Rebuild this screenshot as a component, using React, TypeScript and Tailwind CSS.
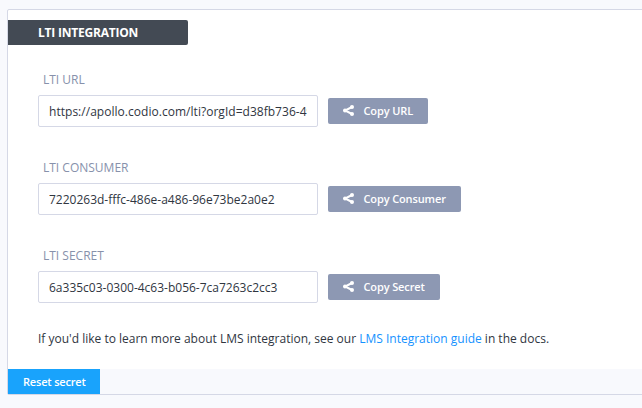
const fields = [
  { label: 'LTI URL', value: 'https://apollo.codio.com/lti?orgId=d38fb736-49', action: 'Copy URL', width: 'w-[100px]', tracking: 'tracking-[0.03px]' },
  { label: 'LTI CONSUMER', value: '7220263d-fffc-486e-a486-96e73be2a0e2', action: 'Copy Consumer', width: 'w-[133px]', tracking: 'tracking-normal' },
  { label: 'LTI SECRET', value: '6a335c03-0300-4c63-b056-7ca7263c2cc3', action: 'Copy Secret', width: 'w-[112px]', tracking: 'tracking-normal' },
];

function ShareIcon() {
  return (
    <svg className="-mt-px h-[11px] w-[11px] shrink-0" viewBox="0 0 11 11" fill="currentColor">
      <path d="M9 2 2 5.5 9 9" fill="none" stroke="currentColor" strokeWidth="2" />
      <circle cx="2" cy="5.5" r="2" />
      <circle cx="9" cy="2" r="2" />
      <circle cx="9" cy="9" r="2" />
    </svg>
  );
}

function Field({ label, value, action, width, tracking }: (typeof fields)[number]) {
  return (
    <div className="h-[88px]">
      <div className="ml-[5px] h-[24px] text-[12px] leading-[18px] text-[#8791ab]">{label}</div>
      <div className="flex items-center gap-[10px]">
        <div className="h-8 w-[280px] rounded-[2px] border border-[#d5d8e6] bg-white px-[10px]">
          <div className={`overflow-hidden whitespace-nowrap text-[12px] leading-[31px] ${tracking}`}>{value}</div>
        </div>
        <button
          className={`flex h-[26px] items-center rounded-[2px] bg-[#8d98b3] pl-[15px] text-[11px] font-semibold tracking-[-0.12px] whitespace-nowrap text-white ${width}`}
        >
          <ShareIcon />
          <span className="ml-[9.5px]">{action}</span>
        </button>
      </div>
    </div>
  );
}

export default function App() {
  return (
    <div className="h-[408px] w-[642px] overflow-hidden bg-[#f8f9fd] pt-[9px] pl-[7px] font-['Open_Sans',sans-serif] text-[#30363f]">
      <section className="flex h-[386px] w-[660px] flex-col rounded-[2px] border border-[#d5d8e6] bg-white">
        <h1 className="mt-[10px] h-[25px] w-[180px] rounded-r-[2px] bg-[#434a54] pl-[30px] text-[12px] leading-[25px] font-bold tracking-[-0.22px] text-white">
          LTI INTEGRATION
        </h1>
        <div className="mt-[26px] flex-1 pl-[30px]">
          {fields.map((field) => (
            <Field key={field.label} {...field} />
          ))}
          <p className="-mt-[5px] text-[12px] leading-[18px] whitespace-nowrap">
            If you'd like to learn more about LMS integration, see our{' '}
            <a className="text-[#1592ff]">LMS Integration guide</a> in the docs.
          </p>
        </div>
        <footer className="h-[25px] bg-[#f8f9fd]">
          <button className="block h-[25px] w-[92px] bg-[#19a3fc] pl-[15px] text-left text-[11px] leading-[25px] font-semibold tracking-[-0.18px] text-white">
            Reset secret
          </button>
        </footer>
      </section>
    </div>
  );
}
